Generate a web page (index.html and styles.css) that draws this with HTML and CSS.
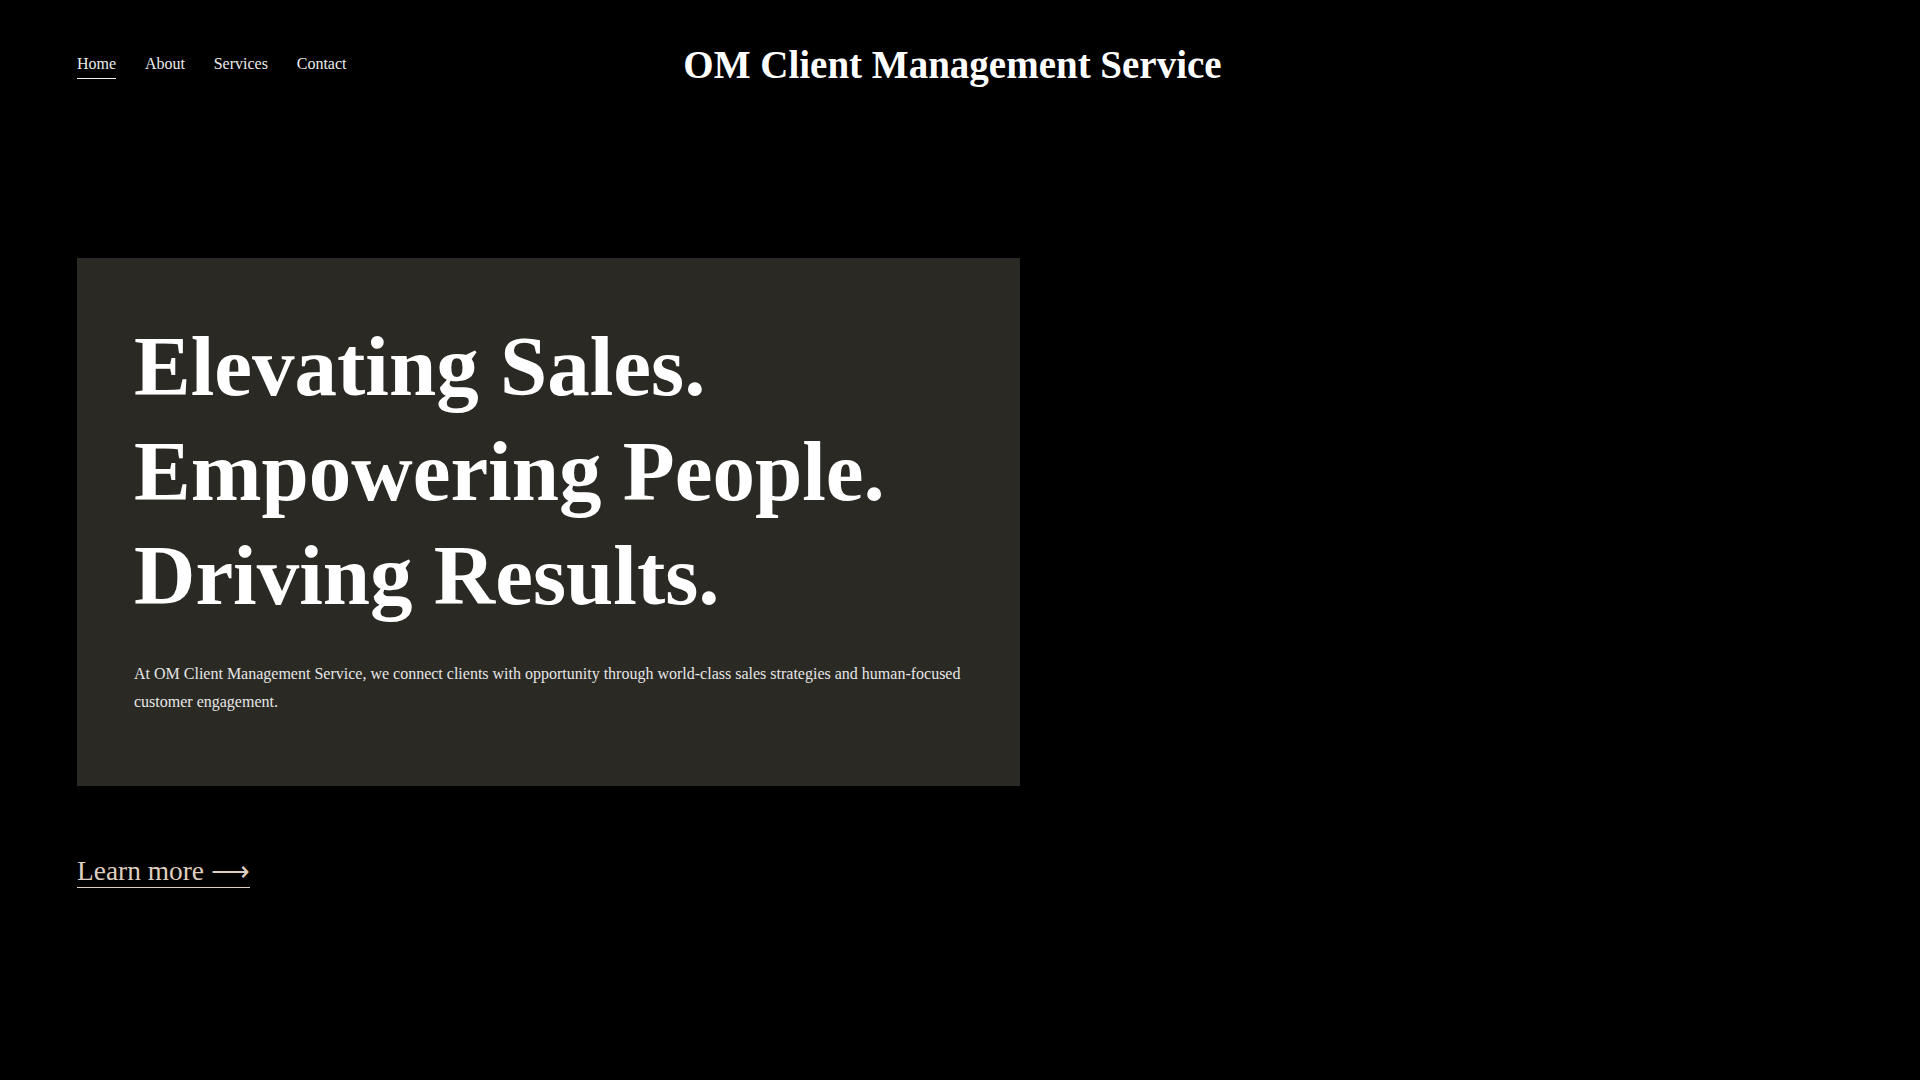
FILE: index.html
```html
<!DOCTYPE html>
<html lang="en">
<head>
<meta charset="utf-8">
<title>OM Client Management Service</title>
<link rel="stylesheet" href="styles.css">
</head>
<body>
<div class="page">
  <header class="site-header">
    <nav class="nav">
      <a class="nav-link active" href="#">Home</a>
      <a class="nav-link" href="#">About</a>
      <a class="nav-link" href="#">Services</a>
      <a class="nav-link" href="#">Contact</a>
    </nav>
    <h1 class="brand">OM Client Management Service</h1>
    <div class="header-spacer"></div>
  </header>
  <main class="hero">
    <section class="hero-card">
      <h2 class="hero-title">Elevating Sales.<br>Empowering People.<br>Driving Results.</h2>
      <p class="hero-text">At OM Client Management Service, we connect clients with opportunity through world-class sales strategies and human-focused customer engagement.</p>
    </section>
    <div class="cta">
      <a class="learn-more" href="#">Learn more <span class="arrow">⟶</span></a>
    </div>
  </main>
</div>
</body>
</html>
```

FILE: styles.css
```css
html {
  overflow-y: scroll;
  scrollbar-gutter: stable;
}

html, body {
  margin: 0;
  padding: 0;
}

body {
  background: #000;
  color: #fff;
  font-family: "Liberation Serif", "Times New Roman", serif;
}

.page {
  padding-right: 15px;
}

.site-header {
  display: grid;
  grid-template-columns: 1fr auto 1fr;
  align-items: center;
  padding: 42px 77px 0;
}

.nav {
  display: flex;
  gap: 28.8px;
}

.nav-link {
  display: inline-block;
  font-size: 16px;
  line-height: normal;
  color: #ececec;
  text-decoration: none;
  padding-top: 5px;
  padding-bottom: 5px;
  border-bottom: 1px solid transparent;
}

.nav-link.active {
  border-bottom-color: #f2f2f2;
}

.brand {
  margin: 0;
  font-size: 39px;
  font-weight: 700;
  line-height: normal;
  color: #fff;
  white-space: nowrap;
}

.hero {
  padding: 171px 77px 210px;
}

.hero-card {
  box-sizing: border-box;
  width: 943px;
  background: #2a2924;
  padding: 56px 56px 69px 57px;
}

.hero-title {
  margin: 0 0 32px;
  font-size: 85px;
  line-height: 104.5px;
  font-weight: 700;
  color: #fff;
}

.hero-text {
  margin: 0;
  font-size: 16px;
  line-height: 28.8px;
  color: #e6e6e6;
}

.cta {
  display: flex;
  margin-top: 69px;
}

.learn-more {
  font-size: 27.4px;
  line-height: normal;
  color: #dfcebf;
  text-decoration: none;
  border-bottom: 1px solid #dfcebf;
}
```
